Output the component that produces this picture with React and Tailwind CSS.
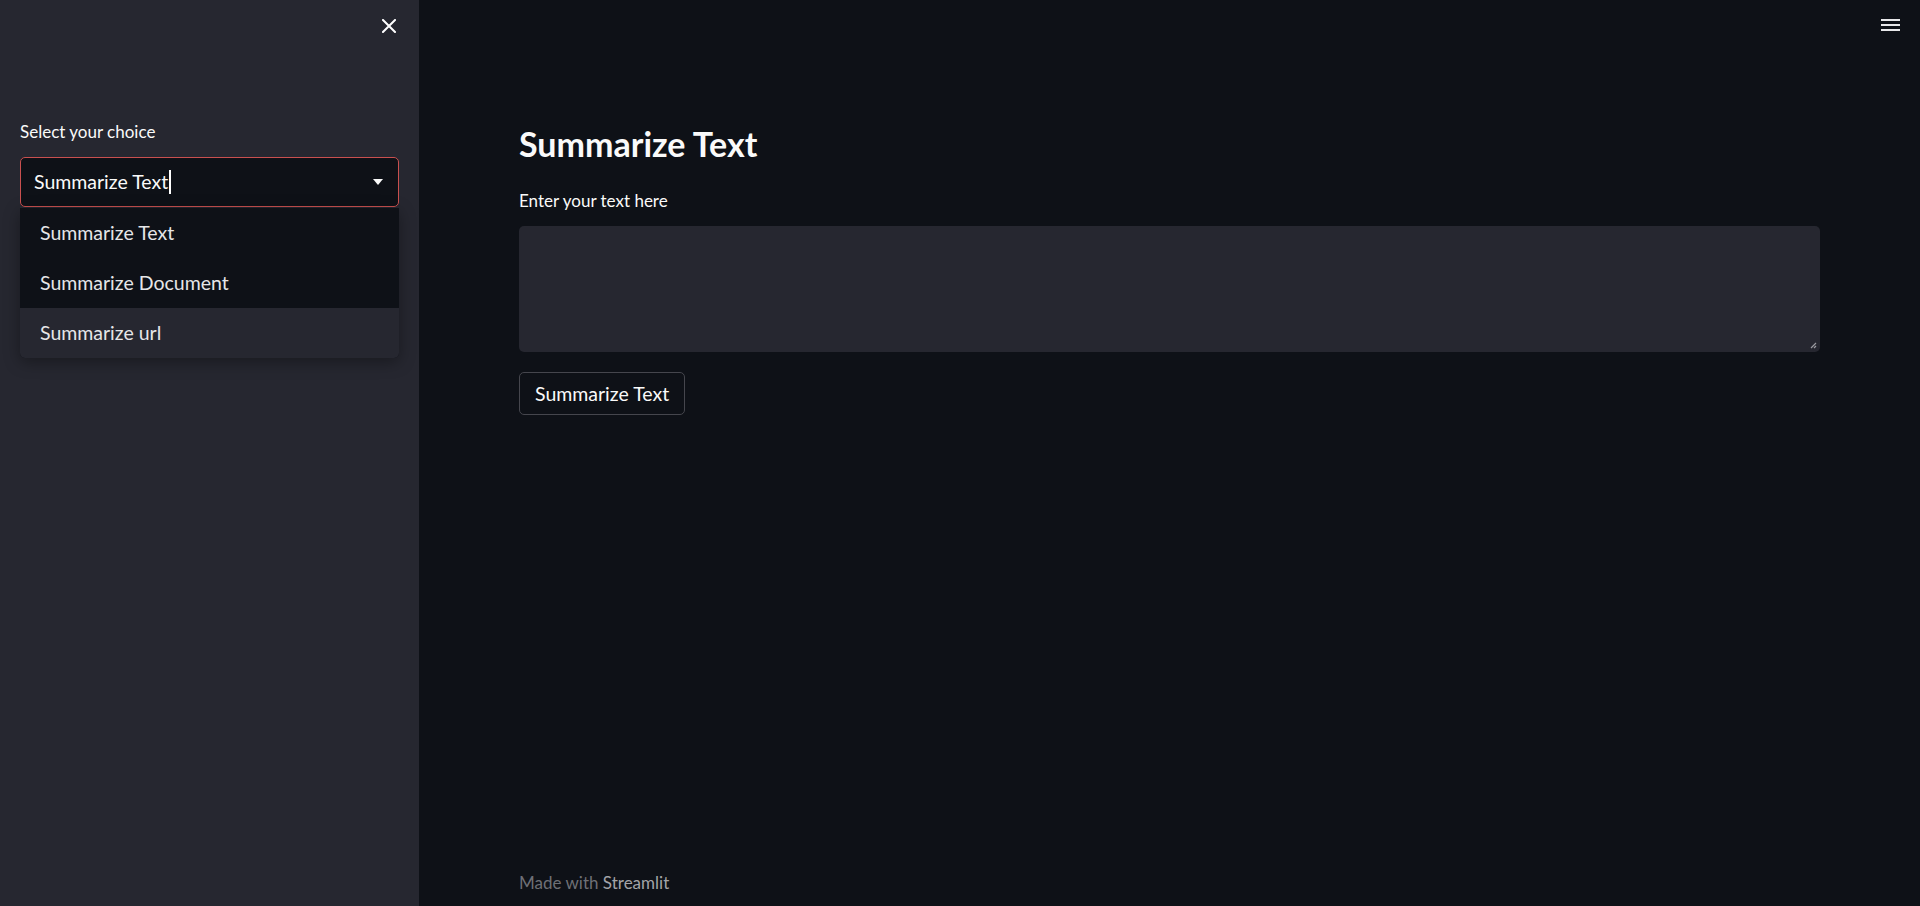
import React from "react";

export default function App() {
  return (
    <div className="flex h-[906px] w-full overflow-hidden bg-[#0e1117] text-[#fafafa] font-['Lato','Noto_Sans',sans-serif]">
      {/* Sidebar */}
      <aside className="relative w-[419px] shrink-0 bg-[#262730]">
        <div className="flex justify-end pt-[19px] pr-[23px]">
          <svg width="14" height="14" viewBox="0 0 14 14" className="text-white">
            <path d="M1 1L13 13M13 1L1 13" stroke="currentColor" strokeWidth="2" strokeLinecap="square" />
          </svg>
        </div>
        <div className="px-[20px] pt-[88px]">
          <div className="text-[17px] leading-[22px] text-[#fafafa]">Select your choice</div>
          <div className="relative mt-[14px]">
            <div className="flex h-[50px] items-center justify-between rounded-[5px] border border-[#c9504f] bg-[#0e1117] pl-[13px] pr-[15px]">
              <div className="flex items-center text-[19.5px] leading-[24px] text-[#fafafa]">
                <span>Summarize Text</span>
                <span className="ml-[1px] inline-block h-[24px] w-[2px] bg-white" />
              </div>
              <svg width="10" height="6" viewBox="0 0 10 6">
                <path d="M0 0H10L5 6Z" fill="#fafafa" />
              </svg>
            </div>
            <div className="absolute left-0 right-0 top-[51px] z-10 overflow-hidden rounded-b-[5px] bg-[#0e1117] shadow-[0_4px_16px_rgba(0,0,0,0.35)]">
              <div className="flex h-[50px] items-center pl-[20px] text-[19.5px] text-[#e6e6e8]">Summarize Text</div>
              <div className="flex h-[50px] items-center pl-[20px] text-[19.5px] text-[#e6e6e8]">Summarize Document</div>
              <div className="flex h-[50px] items-center bg-[#262730] pl-[20px] text-[19.5px] text-[#e6e6e8]">Summarize url</div>
            </div>
          </div>
        </div>
      </aside>

      {/* Main */}
      <main className="relative flex flex-1 flex-col">
        <div className="absolute right-[20px] top-[19px] flex w-[19px] flex-col gap-[3px]">
          <span className="h-[2px] bg-[#e8e8ea]" />
          <span className="h-[2px] bg-[#e8e8ea]" />
          <span className="h-[2px] bg-[#e8e8ea]" />
        </div>
        <div className="flex flex-1 flex-col pl-[100px] pr-[100px] pt-[122px]">
          <h1 className="text-[34px] font-bold leading-[44px] text-[#fafafa]">Summarize Text</h1>
          <label className="mt-[24px] text-[17px] leading-[22px] text-[#fafafa]">Enter your text here</label>
          <div className="relative mt-[14px] h-[126px] w-full rounded-[5px] bg-[#262730]">
            <svg className="absolute bottom-[3px] right-[3px]" width="7" height="7" viewBox="0 0 7 7">
              <path d="M6 1L1 6M6 4L4 6" stroke="#9a9aa0" strokeWidth="1.2" />
            </svg>
          </div>
          <div className="mt-[20px]">
            <button className="flex h-[43px] items-center rounded-[5px] border border-[#45464d] bg-[#0e1117] px-[15px] text-[19.5px] text-[#fafafa]">
              Summarize Text
            </button>
          </div>
          <div className="flex-1" />
          <div className="pb-[12px] text-[17px] leading-[22px]">
            <span className="text-[#6e7076]">Made with </span>
            <span className="text-[#a3a4a8]">Streamlit</span>
          </div>
        </div>
      </main>
    </div>
  );
}
